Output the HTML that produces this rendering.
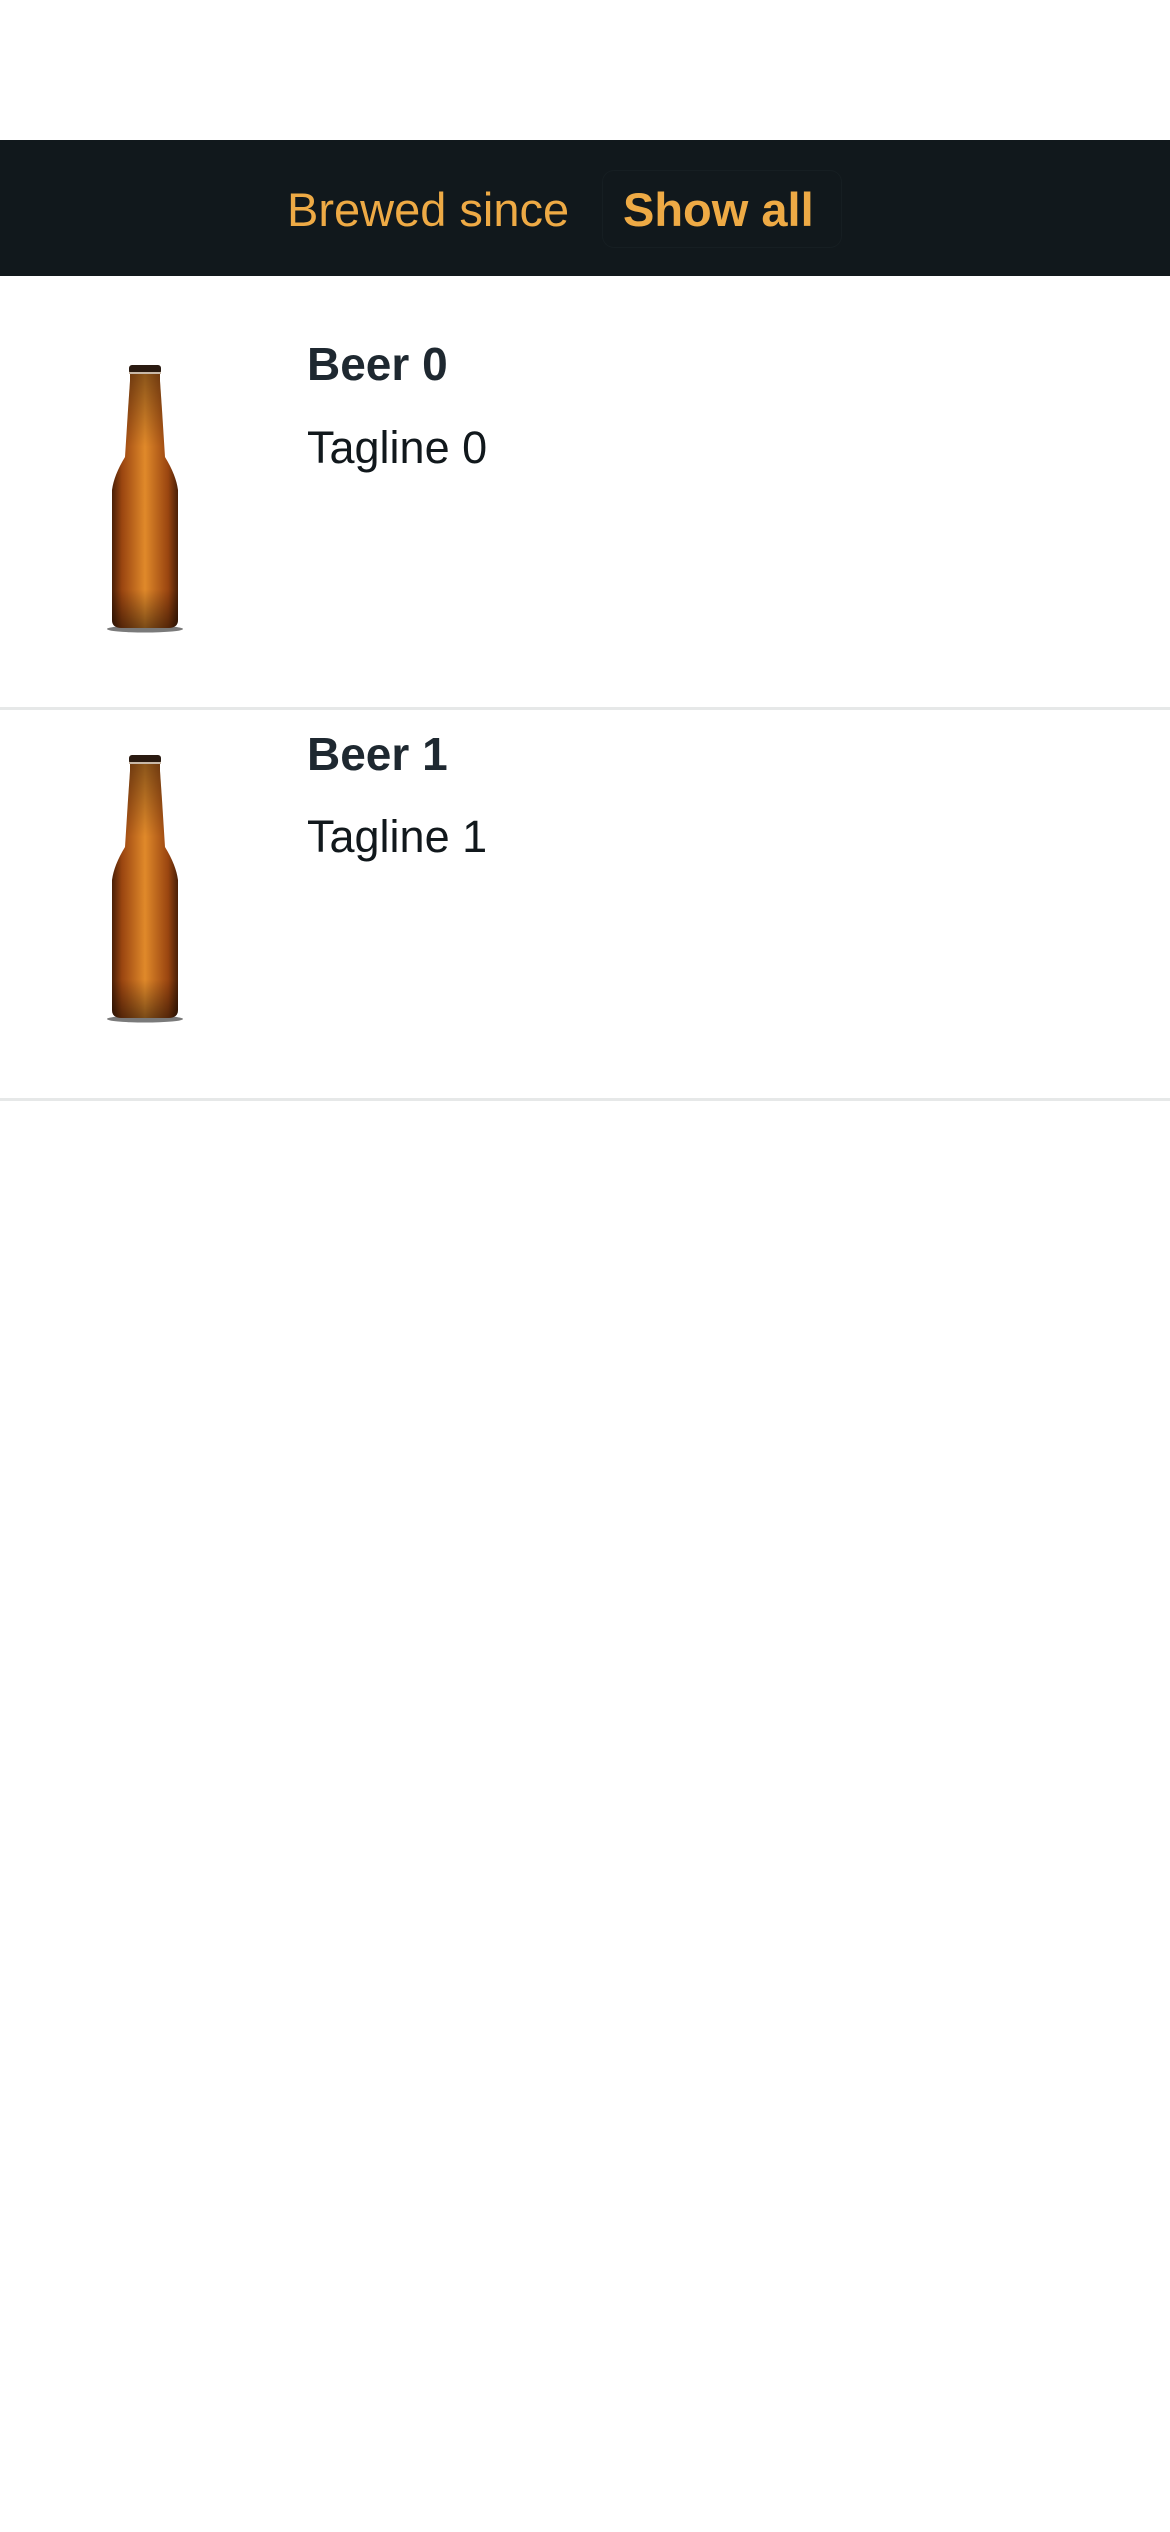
<!DOCTYPE html>
<html><head><meta charset="utf-8"><style>
html,body{margin:0;padding:0;background:#fff;width:1170px;height:2532px;overflow:hidden;font-family:"Liberation Sans",sans-serif;}
.hdr{position:absolute;left:0;top:140px;width:1170px;height:136px;background:#11181c;}
.t{position:absolute;white-space:nowrap;line-height:1;}
.btn{position:absolute;left:602px;top:170px;width:238px;height:76px;border:1px solid #161e22;border-radius:12px;}
.div{position:absolute;left:0;width:1170px;height:3px;background:#e6e8e8;}
</style></head><body>
<div class="hdr"></div>
<div class="btn"></div>
<div class="t" style="left:287px;top:186px;font-size:47px;color:#eeaa45;">Brewed since</div>
<div class="t" style="left:623px;top:186px;font-size:47px;font-weight:bold;color:#eeaa45;">Show all</div>

<svg width="0" height="0" style="position:absolute">
<defs>
<linearGradient id="g" x1="0" x2="1" y1="0" y2="0">
<stop offset="0" stop-color="#4a1f06"/><stop offset="0.15" stop-color="#9a4510"/><stop offset="0.5" stop-color="#e0892a"/><stop offset="0.85" stop-color="#9a4510"/><stop offset="1" stop-color="#4a1f06"/>
</linearGradient>
<linearGradient id="v" x1="0" x2="0" y1="0" y2="1">
<stop offset="0" stop-color="#000" stop-opacity="0.4"/><stop offset="0.3" stop-color="#000" stop-opacity="0"/><stop offset="0.85" stop-color="#000" stop-opacity="0"/><stop offset="1" stop-color="#000" stop-opacity="0.45"/>
</linearGradient>
<g id="b">
<ellipse cx="45" cy="264" rx="38" ry="3.5" fill="#222" opacity="0.6"/>
<path d="M30 4 L60 4 L60 16 L62 45 L65 92 Q76 110 78 125 L78 255 Q78 263 68 263 L22 263 Q12 263 12 255 L12 125 Q14 110 25 92 L28 45 L30 16 Z" fill="url(#g)"/>
<path d="M30 4 L60 4 L60 16 L62 45 L65 92 Q76 110 78 125 L78 255 Q78 263 68 263 L22 263 Q12 263 12 255 L12 125 Q14 110 25 92 L28 45 L30 16 Z" fill="url(#v)"/>
<rect x="29" y="0" width="32" height="9" rx="3" fill="#2a1a10"/>
<rect x="29" y="7" width="32" height="2" fill="#c9b9a8"/>
</g>
</defs></svg>

<svg style="position:absolute;left:100px;top:365px" width="90" height="270" viewBox="0 0 90 270"><use href="#b"/></svg>
<div class="t" style="left:307px;top:341px;font-size:46px;font-weight:bold;color:#1e2830;">Beer 0</div>
<div class="t" style="left:307px;top:425px;font-size:45px;color:#11181c;">Tagline 0</div>
<div class="div" style="top:707px;"></div>

<svg style="position:absolute;left:100px;top:755px" width="90" height="270" viewBox="0 0 90 270"><use href="#b"/></svg>
<div class="t" style="left:307px;top:731px;font-size:46px;font-weight:bold;color:#1e2830;">Beer 1</div>
<div class="t" style="left:307px;top:814px;font-size:45px;color:#11181c;">Tagline 1</div>
<div class="div" style="top:1098px;"></div>
</body></html>
